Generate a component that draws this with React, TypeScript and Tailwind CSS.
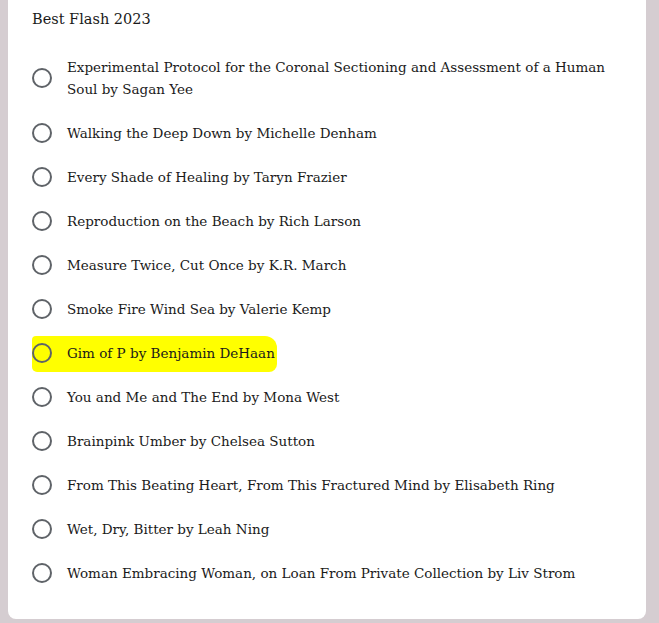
import React from 'react';

const options = [
  'Experimental Protocol for the Coronal Sectioning and Assessment of a Human Soul by Sagan Yee',
  'Walking the Deep Down by Michelle Denham',
  'Every Shade of Healing by Taryn Frazier',
  'Reproduction on the Beach by Rich Larson',
  'Measure Twice, Cut Once by K.R. March',
  'Smoke Fire Wind Sea by Valerie Kemp',
  'Gim of P by Benjamin DeHaan',
  'You and Me and The End by Mona West',
  'Brainpink Umber by Chelsea Sutton',
  'From This Beating Heart, From This Fractured Mind by Elisabeth Ring',
  'Wet, Dry, Bitter by Leah Ning',
  'Woman Embracing Woman, on Loan From Private Collection by Liv Strom',
];

const HIGHLIGHTED = 'Gim of P by Benjamin DeHaan';

export default function App() {
  return (
    <div className="h-[623px] w-[659px] overflow-hidden bg-[#d5cdd1] pl-[8px] pr-[13px]">
      <div
        className="rounded-b-lg bg-white pl-[24px] pr-[36px] pt-[8px] pb-[24px] text-[#1a1a1a]"
        style={{ fontFamily: '"DejaVu Serif", "Liberation Serif", serif' }}
      >
        <h2 className="text-[14.5px] leading-[22px]">Best Flash 2023</h2>
        <ul className="mt-[15px]">
          {options.map((opt) => {
            const hl = opt === HIGHLIGHTED;
            return (
              <li key={opt} className="relative flex items-center gap-[15px] py-[11px]">
                {hl && (
                  <span className="absolute left-0 top-[5px] bottom-[3px] w-[245px] rounded-[4px_12px_8px_5px] bg-[#ffff00]" />
                )}
                <span className="relative h-[20px] w-[20px] shrink-0 rounded-full border-2 border-[#5f6368]" />
                <span className="relative text-[13.5px] leading-[22px]">{opt}</span>
              </li>
            );
          })}
        </ul>
      </div>
    </div>
  );
}
